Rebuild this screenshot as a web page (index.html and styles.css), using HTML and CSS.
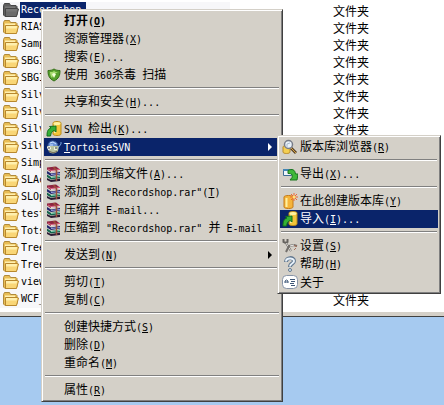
FILE: index.html
```html
<!DOCTYPE html>
<html lang="zh-CN">
<head>
    <meta charset="UTF-8">
    <meta name="viewport" content="width=device-width, initial-scale=1.0">
    <title>TortoiseSVN</title>
    <link rel="stylesheet" href="styles.css">
</head>
<body>
    <!-- shared icons -->
    <svg class="defs" aria-hidden="true">
        <symbol id="folder" viewBox="0 0 16 14">
            <path d="M.5 2.500l1-2h5l1 2h5.500l1 1v8l-1 2h-11L.5 12z" fill="#e9bd55" stroke="#b08a3a"/>
            <path d="M2 3.500h10v2H2z" fill="#fff0b0"/>
            <path d="M2.500 5.500h11.500l1.500.5-2 7.500h-11z" fill="#f9d677" stroke="#b8882e"/>
            <path d="M3 6h11l-.5 2.500H3z" fill="#fff0ae"/>
        </symbol>
        <symbol id="rar" viewBox="0 0 16 16">
            <path d="M1 1.500L10 .5l4 3v1.500L5 6 1 3.500z" fill="#8e2440"/>
            <path d="M2 3l3 1.500 9-1" stroke="#e06080" fill="none"/>
            <path d="M5 5.500l9-1" stroke="#f0e8e8"/>
            <path d="M1 5l4 2.500 9-1.500v2.500L5 10 1 7.500z" fill="#20246c"/>
            <path d="M5 8.500l9-1" stroke="#98a0e0"/>
            <path d="M1 8.500l4 2.500 9-1.500V12l-9 1.500L1 11z" fill="#14644c"/>
            <path d="M5 11.500l9-1" stroke="#88d8b8"/>
            <path d="M1 12l4 2 9-1.500v2.500L5 16l-4-2z" fill="#2c1c34"/>
            <path d="M7.500 1l3 3.500V15" fill="none" stroke="#9c5038" stroke-width="1.500"/>
        </symbol>
        <symbol id="import" viewBox="0 0 16 16">
            <path d="M7 2c0-2 8-2 8 0v11c0 2-8 2-8 0z" fill="#f2c53a" stroke="#b98a1c"/>
            <ellipse cx="11" cy="2.500" rx="3.500" ry="1.500" fill="#fff2a0"/>
            <path d="M9 4v8" stroke="#fff0a0" stroke-width="2"/>
            <path d="M1 15c0-5 1-7 4-8L3.500 5.500 10 5v6L8 9.500c-2 1-3 2-3.500 5.500z" fill="#35b035" stroke="#13701c"/>
        </symbol>
    </svg>

    <div class="explorer">
        <table class="files">
            <colgroup>
                <col class="col-name">
                <col class="col-size">
                <col>
            </colgroup>
            <tbody>
                <tr class="selected"><td class="name"><svg class="folder"><use href="#folder"/></svg><span>Recordshop</span></td><td></td><td>文件夹</td></tr>
                <tr><td class="name"><svg class="folder"><use href="#folder"/></svg><span>RIAS</span></td><td></td><td>文件夹</td></tr>
                <tr><td class="name"><svg class="folder"><use href="#folder"/></svg><span>Samp</span></td><td></td><td>文件夹</td></tr>
                <tr><td class="name"><svg class="folder"><use href="#folder"/></svg><span>SBGI</span></td><td></td><td>文件夹</td></tr>
                <tr><td class="name"><svg class="folder"><use href="#folder"/></svg><span>SBGI</span></td><td></td><td>文件夹</td></tr>
                <tr><td class="name"><svg class="folder"><use href="#folder"/></svg><span>Silv</span></td><td></td><td>文件夹</td></tr>
                <tr><td class="name"><svg class="folder"><use href="#folder"/></svg><span>Silv</span></td><td></td><td>文件夹</td></tr>
                <tr><td class="name"><svg class="folder"><use href="#folder"/></svg><span>Silv</span></td><td></td><td>文件夹</td></tr>
                <tr><td class="name"><svg class="folder"><use href="#folder"/></svg><span>Silv</span></td><td></td><td></td></tr>
                <tr><td class="name"><svg class="folder"><use href="#folder"/></svg><span>Simp</span></td><td></td><td></td></tr>
                <tr><td class="name"><svg class="folder"><use href="#folder"/></svg><span>SLAc</span></td><td></td><td></td></tr>
                <tr><td class="name"><svg class="folder"><use href="#folder"/></svg><span>SLOp</span></td><td></td><td></td></tr>
                <tr><td class="name"><svg class="folder"><use href="#folder"/></svg><span>test</span></td><td></td><td></td></tr>
                <tr><td class="name"><svg class="folder"><use href="#folder"/></svg><span>Tots</span></td><td></td><td></td></tr>
                <tr><td class="name"><svg class="folder"><use href="#folder"/></svg><span>Tree</span></td><td></td><td></td></tr>
                <tr><td class="name"><svg class="folder"><use href="#folder"/></svg><span>Tree</span></td><td></td><td></td></tr>
                <tr><td class="name"><svg class="folder"><use href="#folder"/></svg><span>view</span></td><td></td><td></td></tr>
                <tr><td class="name"><svg class="folder"><use href="#folder"/></svg><span>WCF_</span></td><td></td><td>文件夹</td></tr>
            </tbody>
        </table>
    </div>

    <div class="menu main-menu">
        <button class="item default"><span class="icon"></span><span>打开<span class="en">(<u>O</u>)</span></span></button>
        <button class="item"><span class="icon"></span><span>资源管理器<span class="en">(<u>X</u>)</span></span></button>
        <button class="item"><span class="icon"></span><span>搜索<span class="en">(<u>E</u>)...</span></span></button>
        <button class="item">
            <svg class="icon" viewBox="0 0 16 16">
                <path d="M2 3.500c3 0 4-.5 6-1.500 2 1 3 1.500 6 1.500 0 5-1 8-6 10.500C3 11.500 2 8.500 2 3.500z" fill="#56a02c" stroke="#357018"/>
                <path d="M4 5c2 0 3 0 4-1 1 1 2 1 4 1-3 1-5 3-6 6-1-1-2-3-2-6z" fill="#a8dc70"/>
                <path d="M6 7l2-1 2 1-2 4z" fill="#f2ffd8"/>
            </svg>
            <span>使用<span class="en"> 360</span>杀毒<span class="en"> </span>扫描</span>
        </button>
        <hr>
        <button class="item"><span class="icon"></span><span>共享和安全<span class="en">(<u>H</u>)...</span></span></button>
        <hr>
        <button class="item"><svg class="icon"><use href="#import"/></svg><span><span class="en">SVN </span>检出<span class="en">(<u>K</u>)...</span></span></button>
        <button class="item active">
            <svg class="icon" viewBox="0 0 16 16">
                <path d="M2 7c0-4 3-5.500 5.500-5S12 4 12 7v3H3z" fill="#6c94d8" stroke="#35538f"/>
                <path d="M4 4l3-1 3 2M4 6h3" stroke="#c9e0ff" fill="none"/>
                <path d="M1 7h12l-1 5c-2 3-7 3-9 1z" fill="#b8c4a0"/>
                <path d="M1 8l3-1 1 3-3 1z" fill="#fff"/>
                <path d="M8 8h3v3H8z" fill="#e8eedd"/>
                <path d="M2 9h2M9 9h2" stroke="#333"/>
                <path d="M3 12c3 2 6 2 8 0" stroke="#675a48" fill="none"/>
                <path d="M12 9l3-4v-2" stroke="#76a4dd" fill="none"/>
            </svg>
            <span><span class="en"><u>T</u>ortoiseSVN</span></span>
            <svg class="arrow" viewBox="0 0 4 8"><path d="M0 0l4 4-4 4z"/></svg>
        </button>
        <hr>
        <button class="item"><svg class="icon"><use href="#rar"/></svg><span>添加到压缩文件<span class="en">(<u>A</u>)...</span></span></button>
        <button class="item"><svg class="icon"><use href="#rar"/></svg><span>添加到<span class="en"> "Recordshop.rar"(<u>T</u>)</span></span></button>
        <button class="item"><svg class="icon"><use href="#rar"/></svg><span>压缩并<span class="en"> E-mail...</span></span></button>
        <button class="item"><svg class="icon"><use href="#rar"/></svg><span>压缩到<span class="en"> "Recordshop.rar" </span>并<span class="en"> E-mail</span></span></button>
        <hr>
        <button class="item">
            <span class="icon"></span>
            <span>发送到<span class="en">(<u>N</u>)</span></span>
            <svg class="arrow" viewBox="0 0 4 8"><path d="M0 0l4 4-4 4z"/></svg>
        </button>
        <hr>
        <button class="item"><span class="icon"></span><span>剪切<span class="en">(<u>T</u>)</span></span></button>
        <button class="item"><span class="icon"></span><span>复制<span class="en">(<u>C</u>)</span></span></button>
        <hr>
        <button class="item"><span class="icon"></span><span>创建快捷方式<span class="en">(<u>S</u>)</span></span></button>
        <button class="item"><span class="icon"></span><span>删除<span class="en">(<u>D</u>)</span></span></button>
        <button class="item"><span class="icon"></span><span>重命名<span class="en">(<u>M</u>)</span></span></button>
        <hr>
        <button class="item"><span class="icon"></span><span>属性<span class="en">(<u>R</u>)</span></span></button>
    </div>

    <div class="menu sub-menu">
        <button class="item">
            <svg class="icon" viewBox="0 0 16 16">
                <path d="M1 8c0-2 7-2 7 0v5c0 2-7 2-7 0z" fill="#f4cf52" stroke="#b98a2c"/>
                <path d="M9 9l5 5" stroke="#5a4428" stroke-width="3"/>
                <path d="M9 9l5 5" stroke="#d9a648"/>
                <circle cx="6.500" cy="5.500" r="4" fill="#e8f2fa" stroke="#777c88" stroke-width="1.500"/>
                <path d="M5 8V5l3-1" stroke="#a9b9cc" fill="none"/>
            </svg>
            <span>版本库浏览器<span class="en">(<u>R</u>)</span></span>
        </button>
        <hr>
        <button class="item">
            <svg class="icon" viewBox="0 0 16 16">
                <path d="M1.500 3.500h8v6h-8z" fill="#eef5fb" stroke="#3d6d94"/>
                <path d="M1 3h9v2H1z" fill="#4385b4"/>
                <path d="M6 4.500c4-2 7-1 7.500 3.500H16L15 14H8l2-2.500C11 8 9 7.500 6 7.500z" fill="#40b83a" stroke="#18751c"/>
            </svg>
            <span>导出<span class="en">(<u>X</u>)...</span></span>
        </button>
        <hr>
        <button class="item">
            <svg class="icon" viewBox="0 0 16 16">
                <path d="M2 4c0-2 9-2 9 0v10c0 2-9 2-9 0z" fill="#f5b43a" stroke="#c47a18"/>
                <path d="M4.500 5v9" stroke="#fff0a0" stroke-width="2"/>
                <path d="M12 0v8M8 4h8M9 1l6 6M15 1L9 7" stroke="#ee6634"/>
                <circle cx="12" cy="4" r="1.500" fill="#ffe47a"/>
            </svg>
            <span>在此创建版本库<span class="en">(<u>Y</u>)</span></span>
        </button>
        <button class="item active"><svg class="icon"><use href="#import"/></svg><span>导入<span class="en">(<u>I</u>)...</span></span></button>
        <hr>
        <button class="item">
            <svg class="icon" viewBox="0 0 16 16">
                <path d="M1.500 1v3l2 1 2-1V1M4 5l5 8" fill="none" stroke="#66635f" stroke-width="2"/>
                <path d="M4 5l5 8" stroke="#e4e2de"/>
                <path d="M4 14l3-6 5-1 3 1" fill="none" stroke="#74706c" stroke-width="2"/>
                <path d="M8 8l4-1" stroke="#eee"/>
                <path d="M12 7.500l3 1M14 10l-2 2" stroke="#a8705c"/>
            </svg>
            <span>设置<span class="en">(<u>S</u>)</span></span>
        </button>
        <button class="item">
            <svg class="icon" viewBox="0 0 16 16">
                <path d="M4 6c0-5 8-5 8-1 0 3-4 2-4 6" fill="none" stroke="#62788f" stroke-width="4"/>
                <path d="M4 5.500c0-4 8-4 8-.5 0 3-4 2-4 5.500" fill="none" stroke="#e7f1fa" stroke-width="2"/>
                <circle cx="8" cy="14" r="1.500" fill="#dceaf5" stroke="#62788f"/>
            </svg>
            <span>帮助<span class="en">(<u>H</u>)</span></span>
        </button>
        <button class="item">
            <svg class="icon" viewBox="0 0 16 16">
                <rect x=".5" y="1.500" width="15" height="13" rx="4" fill="#fff" stroke="#8793a6"/>
                <path d="M3 9V7l1.500-1L6 7v2M3 8h3M8 5.500h5M9 7.500h4M8 9.500h4M9 11.500h4" fill="none" stroke="#3f5878"/>
            </svg>
            <span>关于</span>
        </button>
    </div>
</body>
</html>
```
FILE: styles.css
```css
body {
    margin: 0;
    min-height: 100vh;
    background-color: #a6caf0;
    font-family: "Noto Sans CJK SC", sans-serif;
    font-size: 12px;
    line-height: 18px;
    color: #000;
    overflow: hidden;
}
.defs {
    position: absolute;
    width: 0;
    height: 0;
}
.explorer {
    padding: 2px 0 8px;
    background: #fff;
    border-bottom: 1px solid #404040;
    box-shadow: inset 0 -4px #d4d0c8;
}
.files {
    width: 100%;
    table-layout: fixed;
    border-collapse: collapse;
    line-height: 17px;
}
.col-name {
    width: 230px;
}
.col-size {
    width: 103px;
}
.files td {
    height: 17px;
    padding: 0;
    vertical-align: top;
}
.files .name {
    padding-left: 3px;
    background: #f7f7f9;
    font-size: 0;
}
.files .name span {
    display: inline-block;
    padding: 0 5px 0 1px;
    font-family: "DejaVu Sans Mono", monospace;
    font-size: 10px;
    line-height: 16px;
    vertical-align: top;
}
.folder {
    width: 16px;
    height: 14px;
    margin: 1px 1px 0 0;
    vertical-align: top;
}
.selected .name span {
    background: #0a246a;
    color: #fff;
}
.selected .folder {
    filter: grayscale(1) brightness(0.5);
}

/* menus */
.menu {
    position: absolute;
    box-sizing: border-box;
    padding: 2px;
    border: 1px solid;
    border-color: #d4d0c8 #404040 #404040 #d4d0c8;
    box-shadow: inset 1px 1px #fff, inset -1px -1px #808080;
    background: #d4d0c8;
}
.main-menu {
    left: 41px;
    top: 9px;
    width: 242px;
}
.sub-menu {
    left: 277px;
    top: 135px;
    width: 164px;
}
.item {
    display: flex;
    align-items: center;
    width: 100%;
    height: 18px;
    padding: 0 8px 0 2px;
    border: none;
    background: none;
    font: inherit;
    color: inherit;
    text-align: left;
    white-space: pre;
}
.item.active {
    background: #0a246a;
    color: #fff;
}
.item.default {
    font-weight: bold;
}
.icon {
    flex: none;
    width: 16px;
    height: 16px;
    margin-right: 2px;
}
.en {
    font-family: "DejaVu Sans Mono", monospace;
    font-size: 10px;
}
.arrow {
    width: 4px;
    height: 8px;
    margin-left: auto;
    fill: currentColor;
}
.menu hr {
    height: 0;
    margin: 3px 1px 4px;
    border: none;
    border-top: 1px solid #808080;
    border-bottom: 1px solid #fff;
}
```
